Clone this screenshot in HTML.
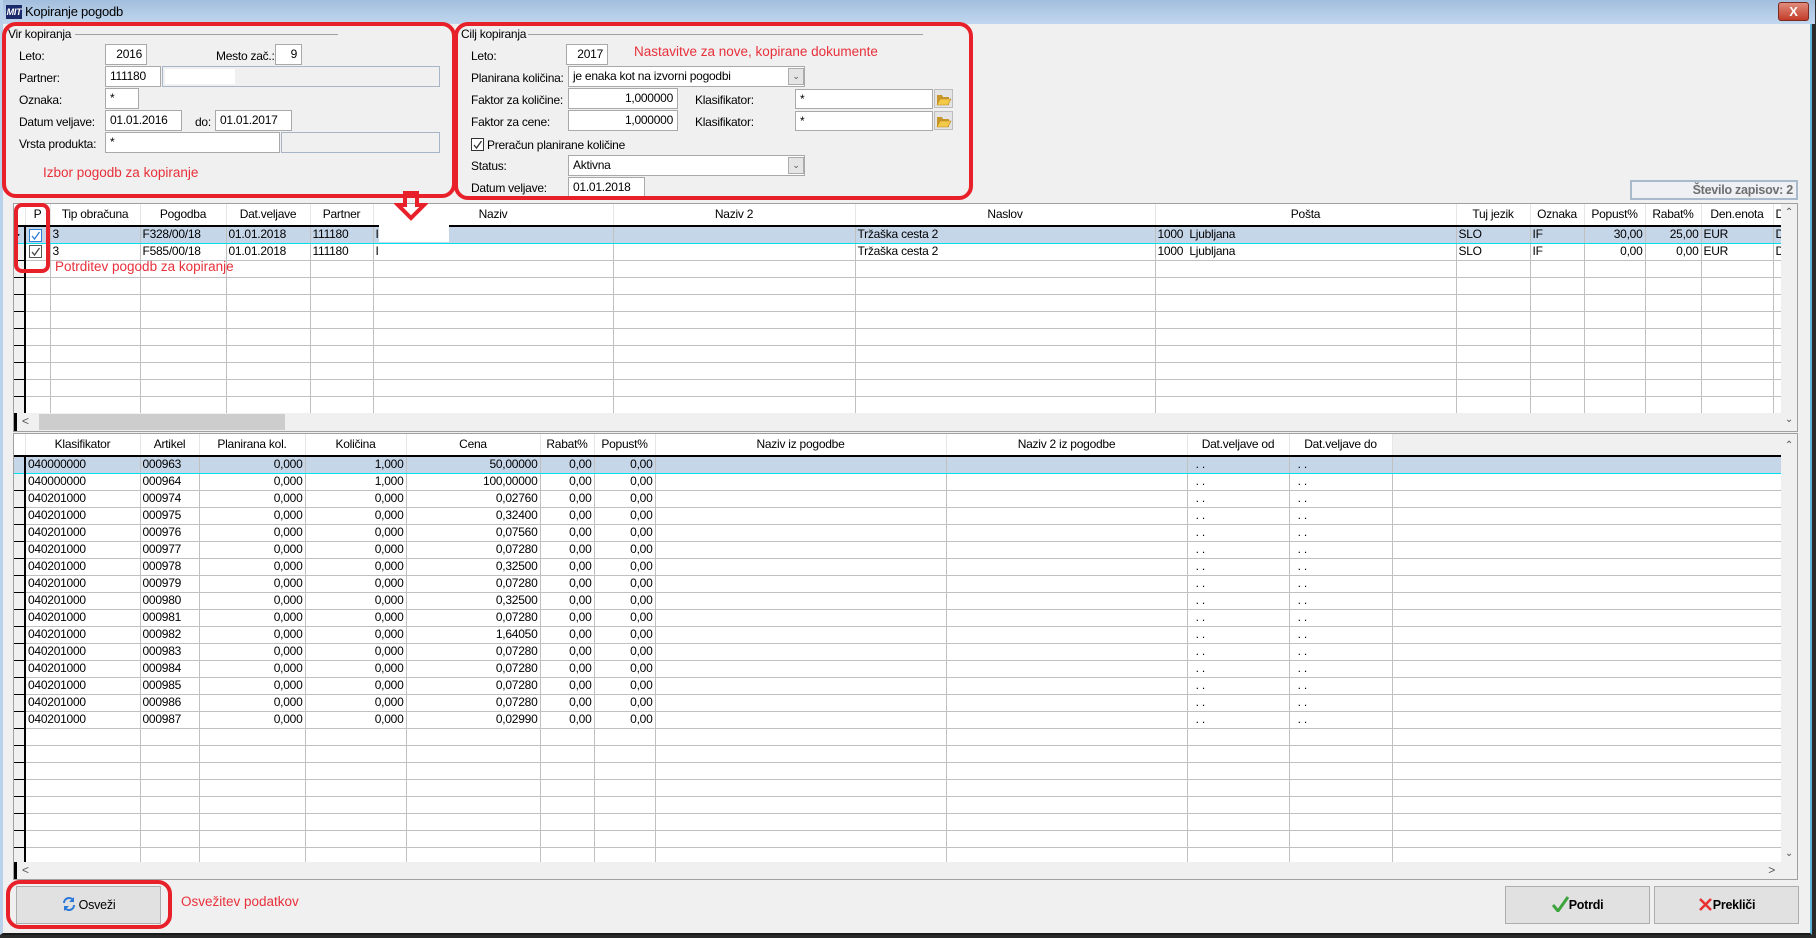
<!DOCTYPE html>
<html><head><meta charset="utf-8">
<style>
*{box-sizing:border-box;margin:0;padding:0}
body{width:1816px;height:938px;overflow:hidden;background:#2a2a2a;font-family:"Liberation Sans",sans-serif;font-size:12px;color:#000;position:relative;letter-spacing:-0.25px}
.win{position:absolute;left:0;top:0;width:1812px;height:935px;background:#f0f0f0;border-left:3px solid #b9d1ea;border-right:2px solid #5fb6d8;border-bottom:2px solid #1a1a1a}
.title{position:absolute;left:0;top:0;width:1812px;height:24px;background:linear-gradient(#a3bedd,#c0d6ee)}
.a{position:absolute}
.lbl{position:absolute;font-size:12px;white-space:nowrap;line-height:14px}
.inp{position:absolute;background:#fff;border:1px solid #a9a9a9;font-size:12px;line-height:18px;padding:0 4px;white-space:nowrap;overflow:hidden}
.gry{background:#f0f0f0;border:1px solid #a7b5c7}
.r{text-align:right}
.red{position:absolute;border:4px solid #e8202a;border-radius:14px}
.rt{position:absolute;color:#e8303a;font-size:13.5px;white-space:nowrap;letter-spacing:0}
.grid{position:absolute;background:#f0f0f0;border:1px solid #a0a0a0;overflow:hidden}
table{border-collapse:collapse;table-layout:fixed;position:absolute;left:0;top:0;background:#fff}
td{height:17px;border-right:1px solid #c0c0c0;border-bottom:1px solid #c0c0c0;padding:0 2px;white-space:nowrap;overflow:hidden;font-size:12px;line-height:15px}
tr.h td{height:22px;text-align:center;border-bottom:2px solid #000;background:#fff;border-right:1px solid #e6e6e6}
td.i{background:#f0f0f0;border-bottom:1px solid #000;border-right:2px solid #000;padding:0}
tr.h td.i{border-bottom:2px solid #000}
tr.s td{background:#c6d6e9;border-top:1px solid #00e0f0;border-bottom:1px solid #00e0f0}
td.n{text-align:right}
.cb{display:inline-block;width:13px;height:13px;border:1px solid #555;background:#fff;vertical-align:middle;position:relative;margin-left:3px}
.btn{position:absolute;background:#e1e1e1;border:1px solid #adadad;text-align:center;font-size:12.5px;line-height:36px}
.vs{position:absolute;background:#f0f0f0}
</style></head><body>
<div class="win">
<div class="title"></div>
<div class="a" style="left:3px;top:5px;width:16px;height:14px;background:#1b2a6b;color:#fff;font-size:9px;font-weight:bold;font-style:italic;line-height:14px;text-align:center">MIT</div>
<div class="lbl" style="left:22px;top:5px;font-size:13px">Kopiranje pogodb</div>
<div class="a" style="left:1775px;top:2px;width:31px;height:19px;border-radius:3px;background:linear-gradient(#e08c7c,#c43c2a);border:1px solid #7a2a20;color:#fff;font-weight:bold;font-size:13px;text-align:center;line-height:17px">X</div>

<!-- Vir kopiranja -->
<div class="lbl" style="left:5px;top:27px">Vir kopiranja</div>
<div class="a" style="left:72px;top:34px;width:263px;border-top:1px solid #a0a0a0"></div>
<div class="lbl" style="left:16px;top:49px">Leto:</div>
<div class="inp r" style="left:102px;top:44px;width:42px;height:21px">2016</div>
<div class="lbl" style="left:213px;top:49px">Mesto zač.:</div>
<div class="inp r" style="left:272px;top:44px;width:27px;height:21px">9</div>
<div class="lbl" style="left:16px;top:71px">Partner:</div>
<div class="inp" style="left:102px;top:66px;width:56px;height:21px">111180</div>
<div class="inp gry" style="left:159px;top:66px;width:278px;height:21px"><div style="position:absolute;left:2px;top:2px;width:70px;height:15px;background:#fff"></div></div>
<div class="lbl" style="left:16px;top:93px">Oznaka:</div>
<div class="inp" style="left:102px;top:88px;width:34px;height:21px">*</div>
<div class="lbl" style="left:16px;top:115px">Datum veljave:</div>
<div class="inp" style="left:102px;top:110px;width:77px;height:21px">01.01.2016</div>
<div class="lbl" style="left:192px;top:115px">do:</div>
<div class="inp" style="left:212px;top:110px;width:77px;height:21px">01.01.2017</div>
<div class="lbl" style="left:16px;top:137px">Vrsta produkta:</div>
<div class="inp" style="left:102px;top:132px;width:175px;height:21px">*</div>
<div class="inp gry" style="left:278px;top:132px;width:159px;height:21px"></div>
<div class="rt" style="left:40px;top:165px">Izbor pogodb za kopiranje</div>
<div class="red" style="left:-1px;top:22px;width:454px;height:176px"></div>

<!-- Cilj kopiranja -->
<div class="lbl" style="left:458px;top:27px">Cilj kopiranja</div>
<div class="a" style="left:525px;top:34px;width:395px;border-top:1px solid #a0a0a0"></div>
<div class="lbl" style="left:468px;top:49px">Leto:</div>
<div class="inp r" style="left:563px;top:44px;width:42px;height:21px">2017</div>
<div class="rt" style="left:631px;top:44px">Nastavitve za nove, kopirane dokumente</div>
<div class="lbl" style="left:468px;top:71px">Planirana količina:</div>
<div class="inp" style="left:565px;top:66px;width:237px;height:21px">je enaka kot na izvorni pogodbi</div>
<div class="a" style="left:785px;top:68px;width:16px;height:17px;background:#e5e5e5;border:1px solid #acacac;font-size:9px;text-align:center;line-height:14px;color:#555">&#8964;</div>
<div class="lbl" style="left:468px;top:93px">Faktor za količine:</div>
<div class="inp r" style="left:565px;top:88px;width:110px;height:21px">1,000000</div>
<div class="lbl" style="left:692px;top:93px">Klasifikator:</div>
<div class="inp" style="left:792px;top:89px;width:138px;height:20px">*</div>
<div class="lbl" style="left:468px;top:115px">Faktor za cene:</div>
<div class="inp r" style="left:565px;top:110px;width:110px;height:21px">1,000000</div>
<div class="lbl" style="left:692px;top:115px">Klasifikator:</div>
<div class="inp" style="left:792px;top:111px;width:138px;height:20px">*</div>
<svg class="a" style="left:931px;top:89px" width="19" height="42"><g><rect x="0.5" y="0.5" width="18" height="18" fill="#e4e4e4" stroke="#bdbdbd"/><path d="M3 6h5l1 2h6v8H3z" fill="#c8962a"/><path d="M3 16l3-6h11l-3 6z" fill="#f3c94a" stroke="#b8861c" stroke-width=".6"/></g><g transform="translate(0,22)"><rect x="0.5" y="0.5" width="18" height="18" fill="#e4e4e4" stroke="#bdbdbd"/><path d="M3 6h5l1 2h6v8H3z" fill="#c8962a"/><path d="M3 16l3-6h11l-3 6z" fill="#f3c94a" stroke="#b8861c" stroke-width=".6"/></g></svg>
<div class="a" style="left:468px;top:138px;width:13px;height:13px;border:1px solid #333;background:#fff"><svg width="11" height="11" style="position:absolute;left:0;top:0"><path d="M2 6l2.5 3L9.5 2" fill="none" stroke="#333" stroke-width="1.3"/></svg></div>
<div class="lbl" style="left:484px;top:138px">Preračun planirane količine</div>
<div class="lbl" style="left:468px;top:159px">Status:</div>
<div class="inp" style="left:565px;top:155px;width:237px;height:21px">Aktivna</div>
<div class="a" style="left:785px;top:157px;width:16px;height:17px;background:#e5e5e5;border:1px solid #acacac;font-size:9px;text-align:center;line-height:14px;color:#555">&#8964;</div>
<div class="lbl" style="left:468px;top:181px">Datum veljave:</div>
<div class="inp" style="left:565px;top:177px;width:77px;height:21px">01.01.2018</div>
<div class="red" style="left:451px;top:22px;width:519px;height:178px"></div>

<div class="a" style="left:1627px;top:180px;width:168px;height:20px;border:2px solid #a9b9cc;background:#eef0f3;color:#6e6e6e;font-weight:bold;font-size:12.5px;text-align:right;padding-right:3px;line-height:16px">Število zapisov: 2</div>

<!-- upper grid -->
<div class="grid" style="left:10px;top:203px;width:1785px;height:229px">
<table style="width:1767px">
<colgroup><col style="width:11px"><col style="width:25px"><col style="width:90px"><col style="width:86px"><col style="width:84px"><col style="width:63px"><col style="width:240px"><col style="width:242px"><col style="width:300px"><col style="width:301px"><col style="width:74px"><col style="width:54px"><col style="width:61px"><col style="width:56px"><col style="width:72px"><col style="width:8px"></colgroup>
<tr class="h"><td class="i"></td><td>P</td><td>Tip obračuna</td><td>Pogodba</td><td>Dat.veljave</td><td>Partner</td><td>Naziv</td><td>Naziv 2</td><td>Naslov</td><td>Pošta</td><td>Tuj jezik</td><td>Oznaka</td><td>Popust%</td><td>Rabat%</td><td>Den.enota</td><td>D</td></tr>
<tr class="s"><td class="i" style="font-size:8px;line-height:15px">&#9654;</td><td style="padding:0"><span class="cb" style="border-color:#2a7fd4"><svg width="11" height="11" style="position:absolute;left:0;top:0"><path d="M2 6l2.5 3L9.5 2" fill="none" stroke="#2a7fd4" stroke-width="1.3"/></svg></span></td><td>3</td><td>F328/00/18</td><td>01.01.2018</td><td>111180</td><td>I</td><td></td><td>Tržaška cesta 2</td><td>1000&nbsp;&nbsp;Ljubljana</td><td>SLO</td><td>IF</td><td class="n">30,00</td><td class="n">25,00</td><td>EUR</td><td>D</td></tr>
<tr><td class="i"></td><td style="padding:0"><span class="cb"><svg width="11" height="11" style="position:absolute;left:0;top:0"><path d="M2 6l2.5 3L9.5 2" fill="none" stroke="#444" stroke-width="1.3"/></svg></span></td><td>3</td><td>F585/00/18</td><td>01.01.2018</td><td>111180</td><td>I</td><td></td><td>Tržaška cesta 2</td><td>1000&nbsp;&nbsp;Ljubljana</td><td>SLO</td><td>IF</td><td class="n">0,00</td><td class="n">0,00</td><td>EUR</td><td>D</td></tr>
<tr><td class="i"></td><td></td><td></td><td></td><td></td><td></td><td></td><td></td><td></td><td></td><td></td><td></td><td></td><td></td><td></td><td></td></tr>
<tr><td class="i"></td><td></td><td></td><td></td><td></td><td></td><td></td><td></td><td></td><td></td><td></td><td></td><td></td><td></td><td></td><td></td></tr>
<tr><td class="i"></td><td></td><td></td><td></td><td></td><td></td><td></td><td></td><td></td><td></td><td></td><td></td><td></td><td></td><td></td><td></td></tr>
<tr><td class="i"></td><td></td><td></td><td></td><td></td><td></td><td></td><td></td><td></td><td></td><td></td><td></td><td></td><td></td><td></td><td></td></tr>
<tr><td class="i"></td><td></td><td></td><td></td><td></td><td></td><td></td><td></td><td></td><td></td><td></td><td></td><td></td><td></td><td></td><td></td></tr>
<tr><td class="i"></td><td></td><td></td><td></td><td></td><td></td><td></td><td></td><td></td><td></td><td></td><td></td><td></td><td></td><td></td><td></td></tr>
<tr><td class="i"></td><td></td><td></td><td></td><td></td><td></td><td></td><td></td><td></td><td></td><td></td><td></td><td></td><td></td><td></td><td></td></tr>
<tr><td class="i"></td><td></td><td></td><td></td><td></td><td></td><td></td><td></td><td></td><td></td><td></td><td></td><td></td><td></td><td></td><td></td></tr>
<tr><td class="i"></td><td></td><td></td><td></td><td></td><td></td><td></td><td></td><td></td><td></td><td></td><td></td><td></td><td></td><td></td><td></td></tr>
</table>
<div class="vs" style="left:1767px;top:0;width:16px;height:227px;font-size:10px;text-align:center;color:#555;line-height:18px">&#8963;<div style="position:absolute;bottom:2px;width:16px">&#8964;</div></div>
<div class="vs" style="left:0;top:209px;width:1767px;height:18px"><div style="position:absolute;left:0;top:0;width:3px;height:18px;background:#000"></div><div style="position:absolute;left:8px;top:1px;color:#555;font-size:12px">&lt;</div><div style="position:absolute;left:25px;top:1px;width:246px;height:16px;background:#cdcdcd"></div></div>
</div>
<div class="red" style="left:11px;top:203px;width:36px;height:70px;border-radius:8px"></div>
<div class="rt" style="left:52px;top:259px">Potrditev pogodb za kopiranje</div>
<div class="a" style="left:376px;top:204px;width:70px;height:38px;background:#fff"></div>
<svg class="a" style="left:391px;top:190px" width="34" height="32"><path d="M11 3h12v12h7L17 28 4 15h7z" fill="none" stroke="#e8202a" stroke-width="4" stroke-linejoin="miter"/></svg>

<!-- lower grid -->
<div class="grid" style="left:10px;top:433px;width:1785px;height:447px">
<table style="width:1767px">
<colgroup><col style="width:11px"><col style="width:115px"><col style="width:59px"><col style="width:106px"><col style="width:101px"><col style="width:134px"><col style="width:54px"><col style="width:61px"><col style="width:291px"><col style="width:241px"><col style="width:102px"><col style="width:103px"><col style="width:389px"></colgroup>
<tr class="h"><td class="i"></td><td>Klasifikator</td><td>Artikel</td><td>Planirana kol.</td><td>Količina</td><td>Cena</td><td>Rabat%</td><td>Popust%</td><td>Naziv iz pogodbe</td><td>Naziv 2 iz pogodbe</td><td>Dat.veljave od</td><td>Dat.veljave do</td><td style="background:#f0f0f0"></td></tr>
<tr class="s"><td class="i"></td><td>040000000</td><td>000963</td><td class="n">0,000</td><td class="n">1,000</td><td class="n">50,00000</td><td class="n">0,00</td><td class="n">0,00</td><td></td><td></td><td>&nbsp;&nbsp;. .</td><td>&nbsp;&nbsp;. .</td><td></td></tr>
<tr><td class="i"></td><td>040000000</td><td>000964</td><td class="n">0,000</td><td class="n">1,000</td><td class="n">100,00000</td><td class="n">0,00</td><td class="n">0,00</td><td></td><td></td><td>&nbsp;&nbsp;. .</td><td>&nbsp;&nbsp;. .</td><td></td></tr>
<tr><td class="i"></td><td>040201000</td><td>000974</td><td class="n">0,000</td><td class="n">0,000</td><td class="n">0,02760</td><td class="n">0,00</td><td class="n">0,00</td><td></td><td></td><td>&nbsp;&nbsp;. .</td><td>&nbsp;&nbsp;. .</td><td></td></tr>
<tr><td class="i"></td><td>040201000</td><td>000975</td><td class="n">0,000</td><td class="n">0,000</td><td class="n">0,32400</td><td class="n">0,00</td><td class="n">0,00</td><td></td><td></td><td>&nbsp;&nbsp;. .</td><td>&nbsp;&nbsp;. .</td><td></td></tr>
<tr><td class="i"></td><td>040201000</td><td>000976</td><td class="n">0,000</td><td class="n">0,000</td><td class="n">0,07560</td><td class="n">0,00</td><td class="n">0,00</td><td></td><td></td><td>&nbsp;&nbsp;. .</td><td>&nbsp;&nbsp;. .</td><td></td></tr>
<tr><td class="i"></td><td>040201000</td><td>000977</td><td class="n">0,000</td><td class="n">0,000</td><td class="n">0,07280</td><td class="n">0,00</td><td class="n">0,00</td><td></td><td></td><td>&nbsp;&nbsp;. .</td><td>&nbsp;&nbsp;. .</td><td></td></tr>
<tr><td class="i"></td><td>040201000</td><td>000978</td><td class="n">0,000</td><td class="n">0,000</td><td class="n">0,32500</td><td class="n">0,00</td><td class="n">0,00</td><td></td><td></td><td>&nbsp;&nbsp;. .</td><td>&nbsp;&nbsp;. .</td><td></td></tr>
<tr><td class="i"></td><td>040201000</td><td>000979</td><td class="n">0,000</td><td class="n">0,000</td><td class="n">0,07280</td><td class="n">0,00</td><td class="n">0,00</td><td></td><td></td><td>&nbsp;&nbsp;. .</td><td>&nbsp;&nbsp;. .</td><td></td></tr>
<tr><td class="i"></td><td>040201000</td><td>000980</td><td class="n">0,000</td><td class="n">0,000</td><td class="n">0,32500</td><td class="n">0,00</td><td class="n">0,00</td><td></td><td></td><td>&nbsp;&nbsp;. .</td><td>&nbsp;&nbsp;. .</td><td></td></tr>
<tr><td class="i"></td><td>040201000</td><td>000981</td><td class="n">0,000</td><td class="n">0,000</td><td class="n">0,07280</td><td class="n">0,00</td><td class="n">0,00</td><td></td><td></td><td>&nbsp;&nbsp;. .</td><td>&nbsp;&nbsp;. .</td><td></td></tr>
<tr><td class="i"></td><td>040201000</td><td>000982</td><td class="n">0,000</td><td class="n">0,000</td><td class="n">1,64050</td><td class="n">0,00</td><td class="n">0,00</td><td></td><td></td><td>&nbsp;&nbsp;. .</td><td>&nbsp;&nbsp;. .</td><td></td></tr>
<tr><td class="i"></td><td>040201000</td><td>000983</td><td class="n">0,000</td><td class="n">0,000</td><td class="n">0,07280</td><td class="n">0,00</td><td class="n">0,00</td><td></td><td></td><td>&nbsp;&nbsp;. .</td><td>&nbsp;&nbsp;. .</td><td></td></tr>
<tr><td class="i"></td><td>040201000</td><td>000984</td><td class="n">0,000</td><td class="n">0,000</td><td class="n">0,07280</td><td class="n">0,00</td><td class="n">0,00</td><td></td><td></td><td>&nbsp;&nbsp;. .</td><td>&nbsp;&nbsp;. .</td><td></td></tr>
<tr><td class="i"></td><td>040201000</td><td>000985</td><td class="n">0,000</td><td class="n">0,000</td><td class="n">0,07280</td><td class="n">0,00</td><td class="n">0,00</td><td></td><td></td><td>&nbsp;&nbsp;. .</td><td>&nbsp;&nbsp;. .</td><td></td></tr>
<tr><td class="i"></td><td>040201000</td><td>000986</td><td class="n">0,000</td><td class="n">0,000</td><td class="n">0,07280</td><td class="n">0,00</td><td class="n">0,00</td><td></td><td></td><td>&nbsp;&nbsp;. .</td><td>&nbsp;&nbsp;. .</td><td></td></tr>
<tr><td class="i"></td><td>040201000</td><td>000987</td><td class="n">0,000</td><td class="n">0,000</td><td class="n">0,02990</td><td class="n">0,00</td><td class="n">0,00</td><td></td><td></td><td>&nbsp;&nbsp;. .</td><td>&nbsp;&nbsp;. .</td><td></td></tr>
<tr><td class="i"></td><td></td><td></td><td></td><td></td><td></td><td></td><td></td><td></td><td></td><td></td><td></td><td></td></tr>
<tr><td class="i"></td><td></td><td></td><td></td><td></td><td></td><td></td><td></td><td></td><td></td><td></td><td></td><td></td></tr>
<tr><td class="i"></td><td></td><td></td><td></td><td></td><td></td><td></td><td></td><td></td><td></td><td></td><td></td><td></td></tr>
<tr><td class="i"></td><td></td><td></td><td></td><td></td><td></td><td></td><td></td><td></td><td></td><td></td><td></td><td></td></tr>
<tr><td class="i"></td><td></td><td></td><td></td><td></td><td></td><td></td><td></td><td></td><td></td><td></td><td></td><td></td></tr>
<tr><td class="i"></td><td></td><td></td><td></td><td></td><td></td><td></td><td></td><td></td><td></td><td></td><td></td><td></td></tr>
<tr><td class="i"></td><td></td><td></td><td></td><td></td><td></td><td></td><td></td><td></td><td></td><td></td><td></td><td></td></tr>
<tr><td class="i"></td><td></td><td></td><td></td><td></td><td></td><td></td><td></td><td></td><td></td><td></td><td></td><td></td></tr>
</table>
<div class="vs" style="left:1767px;top:0;width:16px;height:445px;font-size:10px;text-align:center;color:#555;line-height:24px">&#8963;<div style="position:absolute;bottom:18px;width:16px;line-height:14px">&#8964;</div></div>
<div class="vs" style="left:0;top:428px;width:1767px;height:17px"><div style="position:absolute;left:0;top:0;width:3px;height:17px;background:#000"></div><div style="position:absolute;left:8px;top:1px;color:#555;font-size:12px">&lt;</div><div style="position:absolute;right:6px;top:1px;color:#555;font-size:12px">&gt;</div></div>
</div>

<!-- buttons -->
<div class="btn" style="left:13px;top:886px;width:145px;height:38px"><svg width="14" height="16" style="vertical-align:-3px;margin-right:3px"><path d="M2 7a5 5 0 0 1 9-3" fill="none" stroke="#2a78d8" stroke-width="2"/><path d="M12 1v5H7z" fill="#2a78d8"/><path d="M12 9a5 5 0 0 1-9 3" fill="none" stroke="#2a78d8" stroke-width="2"/><path d="M2 15v-5h5z" fill="#2a78d8"/></svg>Osveži</div>
<div class="red" style="left:3px;top:880px;width:166px;height:49px;border-radius:14px"></div>
<div class="rt" style="left:178px;top:894px">Osvežitev podatkov</div>
<div class="btn" style="left:1502px;top:886px;width:145px;height:38px;font-weight:bold"><svg width="17" height="16" style="vertical-align:-3px"><path d="M1 9l5 6L16 1" fill="none" stroke="#3ca43c" stroke-width="3"/></svg>Potrdi</div>
<div class="btn" style="left:1651px;top:886px;width:145px;height:38px;font-weight:bold"><svg width="15" height="15" style="vertical-align:-3px"><path d="M2 2l11 11M13 2L2 13" stroke="#e83030" stroke-width="2.5"/></svg>Prekliči</div>
</div>
</body></html>
